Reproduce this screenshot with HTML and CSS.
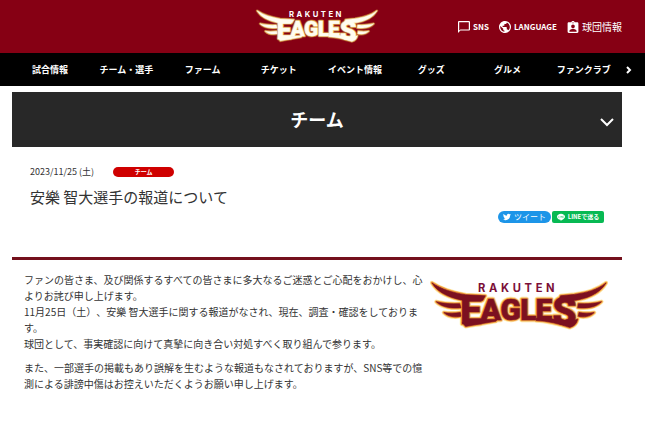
FILE: index.html
```
<!DOCTYPE html>
<html lang="ja">

<head>
    <meta charset="UTF-8">
    <meta name="viewport" content="width=device-width, initial-scale=1.0">
    <title>安樂 智大選手の報道について</title>
    <link rel="stylesheet" href="styles.css">
</head>

<body>
    <!-- logo shapes, shared by the header and the article -->
    <svg class="sprite" aria-hidden="true">
        <defs>
            <g id="eagles">
                <path d="M34 38C64 58 96 67 136 74L196 77L188 91L136 92C98 86 54 72 34 38Z" />
                <path d="M47 95C70 101 94 102 118 101L122 113C96 116 63 112 47 95Z" />
                <path d="M70 128C88 131 103 130 120 128L122 139C104 143 84 141 70 128Z" />
                <path d="M562 38C534 60 504 67 466 73L424 77L418 92L466 91C501 86 542 72 562 38Z" />
                <path d="M548 95C526 101 504 102 478 101L476 113C502 116 533 112 548 95Z" />
                <path d="M526 128C508 131 495 130 480 128L478 139C494 143 512 141 526 128Z" />
                <path d="M126 158L136 170L182 162L228 154L232 148L180 150Z" />
                <path d="M350 145L350 152C386 153 418 162 452 173C466 169 473 162 476 148L452 155C420 148 382 145 350 145Z" />
                <text class="logo-letters"><tspan class="logo-big" x="120" y="164">E</tspan><tspan x="182" y="151">A</tspan><tspan x="242">G</tspan><tspan x="302">L</tspan><tspan x="348">E</tspan><tspan class="logo-big" x="400" y="165">S</tspan></text>
            </g>
            <symbol id="logo" viewBox="28 30 540 150">
                <use class="logo-glow" href="#eagles" />
                <use class="logo-edge" href="#eagles" />
                <use class="logo-fill" href="#eagles" />
                <text class="logo-name" x="174" y="65">RAKUTEN</text>
            </symbol>
        </defs>
    </svg>

    <header class="header">
        <div class="header-inner">
            <a class="header-logo" href="#" aria-label="RAKUTEN EAGLES">
                <svg class="logo logo-white"><use href="#logo" /></svg>
            </a>
            <div class="header-links">
                <a class="header-link header-link-en" href="#">
                    <svg class="icon" viewBox="2 2 20 20"><path d="M20 2H4c-1.100 0-2 .900-2 2v18l4-4h14c1.100 0 2-.900 2-2V4c0-1.100-.900-2-2-2zm0 14H6l-2 2V4h16v12z" /></svg>
                    SNS
                </a>
                <a class="header-link header-link-en" href="#">
                    <svg class="icon" viewBox="2 2 20 20"><path d="M12 2C6.480 2 2 6.480 2 12s4.480 10 10 10 10-4.480 10-10S17.520 2 12 2zm-1 17.930c-3.950-.490-7-3.850-7-7.930 0-.620.080-1.210.210-1.790L9 15v1c0 1.100.900 2 2 2v1.930zm6.900-2.540c-.260-.810-1-1.390-1.900-1.390h-1v-3c0-.550-.450-1-1-1H8v-2h2c.550 0 1-.450 1-1V7h2c1.100 0 2-.900 2-2v-.410c2.930 1.190 5 4.060 5 7.410 0 2.080-.800 3.970-2.100 5.390z" /></svg>
                    LANGUAGE
                </a>
                <a class="header-link" href="#">
                    <svg class="icon" viewBox="2 1 20 20"><path d="M19 3h-4.180C14.400 1.840 13.300 1 12 1s-2.400.840-2.820 2H5c-1.100 0-2 .900-2 2v14c0 1.100.900 2 2 2h14c1.100 0 2-.900 2-2V5c0-1.100-.900-2-2-2zm-7 0c.550 0 1 .450 1 1s-.450 1-1 1-1-.450-1-1 .450-1 1-1zm0 4c1.660 0 3 1.340 3 3s-1.340 3-3 3-3-1.340-3-3 1.340-3 3-3zm6 12H6v-1.400c0-2 4-3.100 6-3.100s6 1.100 6 3.100V19z" /></svg>
                    球団情報
                </a>
            </div>
        </div>
    </header>

    <nav class="nav">
        <ul class="nav-list">
            <li><a href="#">試合情報</a></li>
            <li><a href="#">チーム・選手</a></li>
            <li><a href="#">ファーム</a></li>
            <li><a href="#">チケット</a></li>
            <li><a href="#">イベント情報</a></li>
            <li><a href="#">グッズ</a></li>
            <li><a href="#">グルメ</a></li>
            <li><a href="#">ファンクラブ</a></li>
        </ul>
        <button class="nav-next" type="button" aria-label="次へ">
            <svg viewBox="0 0 6 8"><path d="M1 1l3 3-3 3" /></svg>
        </button>
    </nav>

    <main class="container">
        <button class="section-toggle" type="button">
            <span>チーム</span>
            <svg viewBox="0 0 14 9"><path d="M1 1l6 6 6-6" /></svg>
        </button>

        <article>
            <div class="article-head">
                <p class="article-meta">
                    <time datetime="2023-11-25">2023/11/25 (土)</time>
                    <span class="tag">チーム</span>
                </p>
                <h1 class="article-title">安樂 智大選手の報道について</h1>
                <div class="share">
                    <a class="share-btn share-tweet" href="#">
                        <svg viewBox="0 0 24 24"><path d="M24 4.600a10 10 0 0 1-2.800.800 5 5 0 0 0 2.100-2.700 10 10 0 0 1-3.100 1.200 4.900 4.900 0 0 0-8.400 4.500A14 14 0 0 1 1.700 3.200a4.900 4.900 0 0 0 1.500 6.500 5 5 0 0 1-2.200-.600 4.900 4.900 0 0 0 3.900 4.900 5 5 0 0 1-2.200.100 4.900 4.900 0 0 0 4.600 3.400A10 10 0 0 1 0 19.500 14 14 0 0 0 21.500 7.100 10 10 0 0 0 24 4.600z" /></svg>
                        ツイート
                    </a>
                    <a class="share-btn share-line" href="#">
                        <svg viewBox="0 0 24 24"><path d="M12 2C5.500 2 0 6.100 0 11.200c0 4.600 4.200 8.400 9.900 9.100 1 .200.900.900.600 3.200 4-1.700 13.500-7.100 13.500-12.300C24 6.100 18.500 2 12 2z" /><path class="line-mark" d="M5 9v5h2M10 9v5M13 14V9l3 5V9M20 9h-2v5h2" /></svg>
                        LINEで送る
                    </a>
                </div>
            </div>

            <div class="article-body">
                <div class="article-text">
                    <p>ファンの皆さま、及び関係するすべての皆さまに多大なるご迷惑とご心配をおかけし、心よりお詫び申し上げます。<br>
                        11月25日（土）、安樂 智大選手に関する報道がなされ、現在、調査・確認をしております。<br>
                        球団として、事実確認に向けて真摯に向き合い対処すべく取り組んで参ります。</p>
                    <p>また、一部選手の掲載もあり誤解を生むような報道もなされておりますが、SNS等での憶測による誹謗中傷はお控えいただくようお願い申し上げます。</p>
                </div>
                <svg class="logo logo-red" role="img" aria-label="RAKUTEN EAGLES"><use href="#logo" /></svg>
            </div>
        </article>
    </main>
</body>

</html>
```
FILE: styles.css
```
*,
*::before,
*::after {
    box-sizing: border-box;
}

body {
    margin: 0;
    background-color: #fff;
    color: #333;
    font-family: 'Noto Sans CJK JP', sans-serif;
    font-size: 10px;
    line-height: 16px;
    text-spacing-trim: space-all;
}

p,
h1,
ul {
    margin: 0;
    padding: 0;
}

a {
    color: inherit;
    text-decoration: none;
}

button {
    padding: 0;
    border: 0;
    background: none;
    color: inherit;
    font-family: inherit;
    cursor: pointer;
}

svg {
    display: block;
}

/* logo */
.sprite {
    position: absolute;
    width: 0;
    height: 0;
}

.logo {
    width: 100%;
}

.logo-white {
    --fill: #fffdf0;
    --edge: #d9a04a;
    --glow: #a5402a;
    --name: #fff;
    height: 34px;
}

.logo-red {
    --fill: #7c1020;
    --edge: #f09a3a;
    --glow: #fde6a4;
    --name: #7c1038;
    height: 50px;
}

.logo-letters {
    font-family: 'Roboto', sans-serif;
    font-size: 90px;
    font-weight: 900;
}

.logo-big {
    font-size: 116px;
}

.logo-glow {
    fill: var(--glow);
    stroke: var(--glow);
    stroke-width: 13px;
    stroke-linejoin: round;
}

.logo-edge {
    fill: var(--edge);
    stroke: var(--edge);
    stroke-width: 8px;
    stroke-linejoin: round;
}

.logo-fill {
    fill: var(--fill);
    stroke: var(--fill);
    stroke-width: 2px;
}

.logo-name {
    fill: var(--name);
    font-family: 'Inter', sans-serif;
    font-size: 34px;
    font-weight: 700;
    letter-spacing: 11px;
}

/* header */
.header {
    background-color: #860014;
    color: #fff;
}

.header-inner {
    display: grid;
    grid-template-columns: 1fr 124px 1fr;
    align-items: center;
    margin: 0 23px 0 12px;
    padding: 9px 0 10px;
}

.header-logo {
    grid-column: 2;
}

.header-links {
    display: flex;
    justify-content: flex-end;
    gap: 10px;
    margin-top: 2px;
}

.header-link {
    display: flex;
    align-items: center;
    gap: 3px;
}

.header-link-en {
    font-size: 8px;
    font-weight: 700;
}

.icon {
    width: 12px;
    height: 12px;
    fill: #fff;
}

/* navigation */
.nav {
    display: flex;
    padding: 0 9px 0 12px;
    background-color: #000;
    color: #fff;
}

.nav-list {
    flex: 1;
    display: grid;
    grid-template-columns: repeat(8, 1fr);
    list-style: none;
    font-size: 9px;
    font-weight: 700;
    line-height: 33px;
    text-align: center;
    white-space: nowrap;
}

.nav-next {
    display: flex;
    align-items: center;
    justify-content: center;
    width: 14px;
}

.nav-next svg {
    width: 6px;
    height: 8px;
    fill: none;
    stroke: #fff;
    stroke-width: 2px;
}

/* content */
.container {
    margin: 6px 23px 0 12px;
}

.section-toggle {
    display: grid;
    grid-template-columns: 1fr auto 1fr;
    align-items: center;
    width: 100%;
    padding: 14px 8px;
    background-color: #282828;
    color: #fff;
    font-size: 18px;
    font-weight: 700;
    line-height: 27px;
}

.section-toggle span {
    grid-column: 2;
}

.section-toggle svg {
    justify-self: end;
    width: 14px;
    height: 9px;
    margin-top: 6px;
    fill: none;
    stroke: #fff;
    stroke-width: 2px;
}

.article-head {
    padding: 17px 18px 34px;
    border-bottom: 3px solid #74101c;
}

.article-meta {
    display: flex;
    align-items: center;
    gap: 19px;
    font-size: 9px;
}

.tag {
    width: 61px;
    border-radius: 5px;
    background-color: #cf0000;
    color: #fff;
    font-size: 6px;
    font-weight: 700;
    line-height: 10px;
    text-align: center;
}

.article-title {
    margin-top: 7px;
    font-size: 15px;
    font-weight: 400;
    line-height: 20px;
}

.share {
    display: flex;
    justify-content: flex-end;
    gap: 1px;
    margin-top: 4px;
}

.share-btn {
    display: flex;
    align-items: center;
    justify-content: center;
    gap: 3px;
    height: 12px;
    color: #fff;
    line-height: 12px;
    white-space: nowrap;
}

.share-btn svg {
    width: 8px;
    height: 8px;
    fill: #fff;
}

.share-tweet {
    width: 53px;
    border-radius: 6px;
    background-color: #1d95e8;
    font-size: 8px;
}

.share-line {
    width: 52px;
    border-radius: 2px;
    background-color: #07b953;
    font-size: 6px;
    font-weight: 700;
}

.share-btn .line-mark {
    fill: none;
    stroke: #07b953;
    stroke-width: 1px;
}

.article-body {
    display: grid;
    grid-template-columns: 1fr 178px;
    gap: 4px;
    padding: 12px 14px 24px 12px;
}

.article-text p + p {
    margin-top: 8px;
}

.article-body .logo {
    margin-top: 8px;
}
```
